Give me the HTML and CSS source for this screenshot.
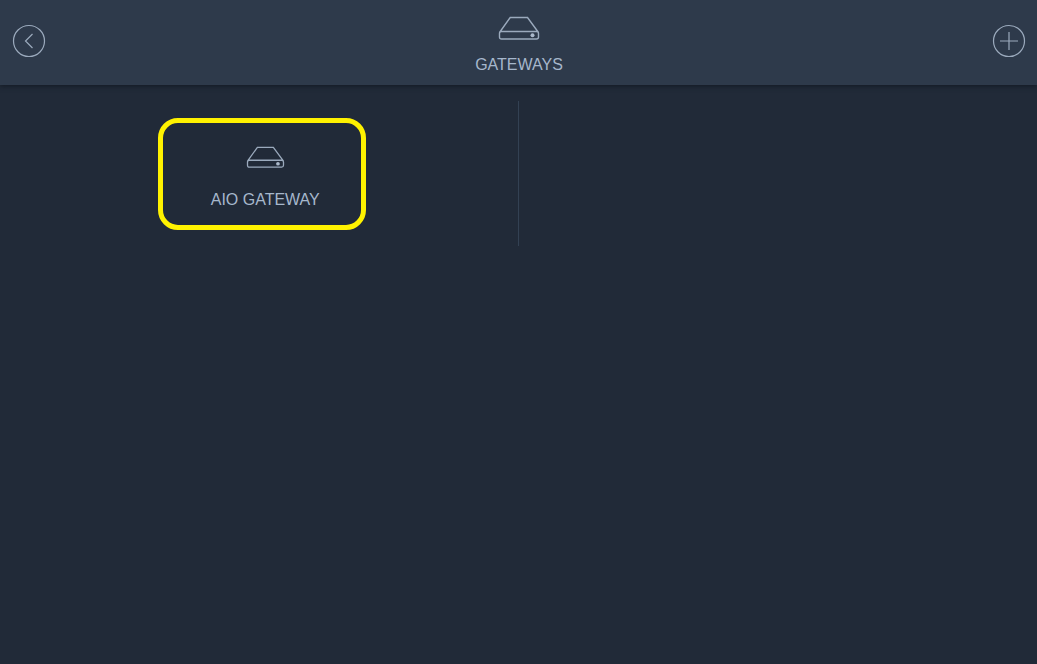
FILE: index.html
```html
<!DOCTYPE html>
<html lang="en">
<head>
<meta charset="utf-8">
<title>Gateways</title>
<link rel="stylesheet" href="styles.css">
</head>
<body>
<header class="header">
  <button class="round-button" type="button" aria-label="Back">
    <svg width="34" height="34" viewBox="0 0 34 34"><circle cx="17" cy="17" r="15.5"/><path d="M20.5 10 13.500 17l7 7"/></svg>
  </button>
  <div class="heading">
    <svg class="device" width="42" height="26" viewBox="0 0 42 26"><path d="M1.500 17.500 12.200 2.500H29.500L40.500 17.500M3.500 16.500H38.500Q40.500 16.500 40.500 18.500V22Q40.500 24 38.500 24H3.500Q1.500 24 1.500 22V18.500Q1.500 16.500 3.500 16.500Z"/><circle class="dot" cx="34.500" cy="20.300" r="2"/></svg>
    <h1 class="title">GATEWAYS</h1>
  </div>
  <button class="round-button" type="button" aria-label="Add gateway">
    <svg width="34" height="34" viewBox="0 0 34 34"><circle cx="17" cy="17" r="15.5"/><path d="M8 17H26M17 8V26"/></svg>
  </button>
</header>
<main class="grid">
  <div class="cell">
    <button class="tile" type="button">
      <svg class="device" width="39" height="24" viewBox="0 0 42 26"><path d="M1.500 17.500 12.200 2.500H29.500L40.500 17.500M3.500 16.500H38.500Q40.500 16.500 40.500 18.500V22Q40.500 24 38.500 24H3.500Q1.500 24 1.500 22V18.500Q1.500 16.500 3.500 16.500Z"/><circle class="dot" cx="34.500" cy="20.300" r="2"/></svg>
      <span>AIO GATEWAY</span>
    </button>
  </div>
  <div class="cell"></div>
</main>
</body>
</html>
```
FILE: styles.css
```css
* {
  box-sizing: border-box;
}

body {
  margin: 0;
  min-height: 100vh;
  background: #212a38;
  color: #a6b7cc;
  font: 16px/20px "Liberation Sans", Arial, sans-serif;
}

button {
  background: none;
  color: inherit;
  font: inherit;
  cursor: pointer;
}

svg {
  display: block;
  fill: none;
  stroke: #9baabd;
  stroke-width: 1.2;
}

.header {
  display: flex;
  align-items: center;
  justify-content: space-between;
  height: 85px;
  padding: 0 11px 3px 12px;
  background: #2e3a4b;
  box-shadow: 0 1px 5px #121923;
}

.round-button {
  padding: 0;
  border: 0;
}

.heading {
  display: flex;
  flex-direction: column;
  align-items: center;
  gap: 14px;
  padding-top: 7px;
}

.title {
  margin: 0;
  font-size: 16px;
  font-weight: 400;
}

.device {
  stroke-width: 1.4;
}

.dot {
  fill: #abb9cb;
  stroke: none;
}

.grid {
  display: grid;
  grid-template-columns: 1fr 1fr;
  padding-top: 16px;
}

.cell {
  display: flex;
  justify-content: center;
  height: 145px;
  padding: 17px 0 16px 6px;
}

.cell:first-child {
  border-right: 1px solid #334153;
}

.tile {
  display: flex;
  flex-direction: column;
  align-items: center;
  justify-content: center;
  gap: 21px;
  width: 208px;
  padding: 7px 0 0 7px;
  border: 5px solid #fff200;
  border-radius: 20px;
}
```
